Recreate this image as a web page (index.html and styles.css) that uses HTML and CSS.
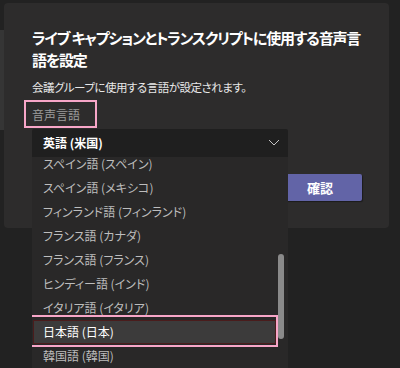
FILE: index.html
```html
<!DOCTYPE html>
<html lang="ja">
<head>
<meta charset="utf-8">
<link rel="stylesheet" href="styles.css">
</head>
<body>
<div class="backdrop-strip"></div>
<div class="dialog">
  <h1 class="title">ライブ キャプションとトランスクリプトに使用する音声言<br>語を設定</h1>
  <p class="subtitle">会議グループに使用する言語が設定されます。</p>
  <div class="label">音声言語</div>
  <div class="combo-wrap">
    <div class="combo">
      <span class="combo-value">英語 (米国)</span>
      <svg class="chevron" width="12" height="7" viewBox="0 0 12 7"><path d="M1 1 L6 6 L11 1" fill="none" stroke="#c4c4c4" stroke-width="1"/></svg>
    </div>
    <div class="list">
      <div class="list-inner">
        <div class="item">スペイン語 (スペイン)</div>
        <div class="item">スペイン語 (メキシコ)</div>
        <div class="item">フィンランド語 (フィンランド)</div>
        <div class="item">フランス語 (カナダ)</div>
        <div class="item">フランス語 (フランス)</div>
        <div class="item">ヒンディー語 (インド)</div>
        <div class="item">イタリア語 (イタリア)</div>
        <div class="item item-active">日本語 (日本)</div>
        <div class="item">韓国語 (韓国)</div>
      </div>
      <div class="scrollbar"></div>
    </div>
  </div>
  <div class="footer">
    <button class="btn-primary">確認</button>
  </div>
</div>
</body>
</html>
```

FILE: styles.css
```css
html, body {
  margin: 0;
  padding: 0;
}
body {
  width: 400px;
  height: 368px;
  overflow: hidden;
  background: #222222;
  font-family: "Noto Sans CJK JP", "Noto Sans", sans-serif;
  font-feature-settings: "palt";
  position: relative;
}
.backdrop-strip {
  position: absolute;
  left: 0;
  top: 30px;
  width: 4px;
  height: 100px;
  background: #353535;
}
.dialog {
  position: relative;
  margin: 3px 0 0 4px;
  width: 385px;
  height: 225px;
  box-sizing: border-box;
  padding: 24px 17px 0 28px;
  background: #2d2c2c;
  border-radius: 4px;
}
.title {
  margin: 0;
  white-space: nowrap;
  font-size: 15px;
  letter-spacing: -1.2px;
  line-height: 22px;
  font-weight: 700;
  color: #ffffff;
}
.subtitle {
  margin: 7px 0 0;
  font-size: 11.5px;
  letter-spacing: -0.5px;
  line-height: 18px;
  color: #e8e8e8;
}
.label {
  display: inline-block;
  margin: 4px 0 0 -8px;
  padding: 0 15px 0 6px;
  height: 24px;
  line-height: 26px;
  border: 2px solid #f7a6c8;
  font-size: 12px;
  color: #9c9c9c;
}
.combo-wrap {
  position: relative;
  width: 256px;
  margin-top: 1px;
}
.combo {
  position: relative;
  z-index: 2;
  height: 28px;
  background: #1f1f1f;
  display: flex;
  align-items: center;
  justify-content: space-between;
  padding: 0 8px 0 11px;
  border-radius: 2px 2px 0 0;
}
.combo-value {
  font-size: 12px;
  font-weight: 700;
  color: #ffffff;
  line-height: 28px;
}
.chevron {
  display: block;
  margin-top: -1px;
}
.list {
  position: absolute;
  z-index: 3;
  left: 0;
  top: 28px;
  width: 256px;
  height: 220px;
  background: #292828;
  overflow: hidden;
}
.list-inner {
  margin-top: -5px;
}
.item {
  height: 24px;
  line-height: 24px;
  padding-left: 11px;
  font-size: 12px;
  color: #bdbdbd;
  white-space: nowrap;
}
.item-active {
  position: relative;
  margin: 0 12px 0 1px;
  padding-left: 10px;
  background: #3c3b3b;
  color: #ffffff;
  box-shadow: inset 0 0 0 1px #4a1c1c;
}
.item-active::after {
  content: "";
  position: absolute;
  left: -3px;
  right: -2px;
  top: -5px;
  bottom: -3px;
  border: 2px solid #f7a6c8;
}
.scrollbar {
  position: absolute;
  left: 246px;
  top: 97px;
  width: 6px;
  height: 85px;
  border-radius: 3px;
  background: #8a8a8a;
}
.footer {
  display: flex;
  justify-content: flex-end;
  margin-top: 17px;
  margin-right: 10px;
}
.btn-primary {
  width: 84px;
  height: 27px;
  border: none;
  border-radius: 2px;
  background: #6264a7;
  color: #ffffff;
  font-family: inherit;
  font-size: 13px;
  font-weight: 700;
  padding: 0;
  box-shadow: 1px 1px 1px rgba(0,0,0,0.4);
}
```
